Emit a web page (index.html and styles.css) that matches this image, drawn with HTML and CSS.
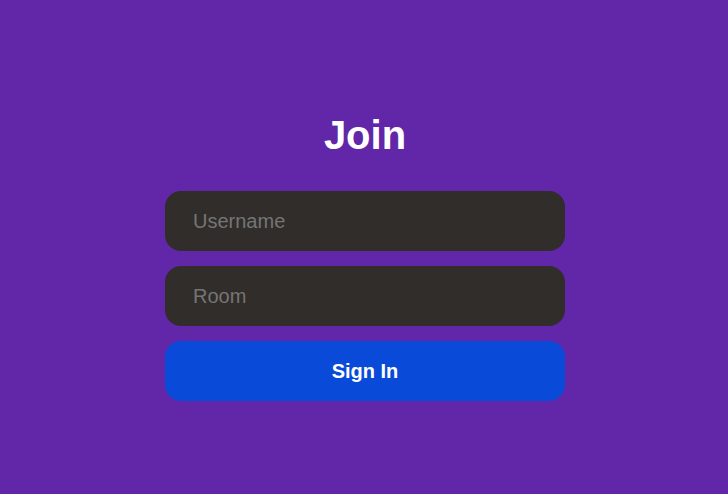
FILE: index.html
```html
<!DOCTYPE html>
<html>
<head>
<meta charset="utf-8">
<link rel="stylesheet" href="styles.css">
</head>
<body>
<main class="page">
  <form class="join-form">
    <h1 class="title">Join</h1>
    <input class="field" type="text" placeholder="Username">
    <input class="field" type="text" placeholder="Room">
    <button class="submit" type="button">Sign In</button>
  </form>
</main>
</body>
</html>
```
FILE: styles.css
```css
* { box-sizing: border-box; }
html, body { margin: 0; height: 100%; }
body {
  background: #6226a8;
  font-family: "Liberation Sans", Arial, sans-serif;
}
.page {
  height: 100%;
  display: flex;
  justify-content: center;
  padding-top: 112px;
  padding-left: 2px;
}
.join-form {
  width: 400px;
  display: flex;
  flex-direction: column;
  gap: 15px;
}
.title {
  margin: 0 0 18px;
  text-align: center;
  color: #ffffff;
  font-size: 40px;
  font-weight: bold;
  line-height: 46px;
}
.field {
  height: 60px;
  border: none;
  border-radius: 16px;
  background: #302d2b;
  padding: 0 28px;
  font-family: inherit;
  font-size: 20px;
  color: #ffffff;
  outline: none;
}
.field::placeholder { color: #767574; }
.submit {
  height: 60px;
  border: none;
  border-radius: 16px;
  background: #0a4ad8;
  color: #ffffff;
  font-family: inherit;
  font-size: 20px;
  font-weight: bold;
}
```
